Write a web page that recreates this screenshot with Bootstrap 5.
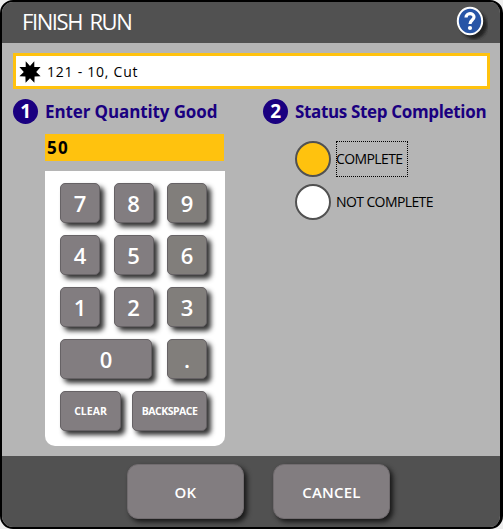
<!DOCTYPE html>
<html lang="en">
<head>
<meta charset="utf-8">
<title>Finish Run</title>
<link href="https://cdn.jsdelivr.net/npm/bootstrap@5.3.0/dist/css/bootstrap.min.css" rel="stylesheet">
<style>
body{background:#eee;font-family:"Open Sans","Noto Sans",sans-serif;color:#000;line-height:1}
.dialog{width:503px;height:529px;background:#b5b5b5;border:2px solid #000;border-right-width:3px;border-radius:13px}
.titlebar{height:41px;background:#515151;padding:0 12px 0 20px}
.titlebar h1{font-size:22px;line-height:39px;height:41px;letter-spacing:-1.4px;word-spacing:3px}
.stepbox{margin:10px 10px 0 11px;height:36px;border:3px solid #ffc20e;background:#fff;padding:1px 0 0 3px;font-size:14px;gap:6px}
.job{letter-spacing:.75px}
.content{height:367px;padding:10px 0 0 11px}
.step-title{height:25px;gap:7px;color:#1a0080;font-size:17px;font-weight:700;white-space:nowrap;letter-spacing:-.12px}
.step-title-status{letter-spacing:-.34px}
.step-num{width:25px;height:25px;background:#1a0080;color:#fff;font-size:19px}
.left-col{width:250px}
.qty{width:179px;height:27px;margin:10px 0 0 32px;background:#ffc20e;padding-left:2px;font-size:17px;font-weight:700;letter-spacing:1.2px}
.pad{width:180px;height:275px;margin:10px 0 0 32px;padding:12px 18px 0 15px;background:#fff;border-radius:0 0 10px 10px;gap:12px}
.key{width:40px;height:40px;padding:0;border:1px solid #666265;border-radius:5px;background:#827d80;color:#fff;font-size:22px;font-weight:600;line-height:1;box-shadow:4px 4px 5px #333}
.key:hover{background:#777275;color:#fff}
.key-alt{background:#817e7b}
.key-zero{width:92px}.key-clear{width:61px}.key-back{width:75px}
.key-word{font-size:10.5px;font-weight:700}
.key-back{letter-spacing:-.5px}
.choices{margin:17px 0 0 32px;gap:7px}
.choice{height:36px;gap:5px;font-size:14px}
.knob{width:36px;height:36px;border:2px solid #515151;background:#fff}
.knob.on{background:#ffc20e}
.choice-label{height:36px;width:72px;border:1px solid transparent;white-space:nowrap;letter-spacing:-.6px;text-indent:-1px}
.choice-label.focused{border:1px dotted #000}
.actions{height:71px;background:#515151;padding:8px 0 0 125px;gap:29px}
.action{width:117px;height:55px;border:1px solid #716c6f;border-radius:11px;background:#827d80;color:#fff;font-size:15px;font-weight:600;padding:2px 0 0;letter-spacing:.2px;box-shadow:3px 3px 5px #181818}
</style>
</head>
<body>
<main class="dialog overflow-hidden">
<header class="titlebar d-flex align-items-center justify-content-between text-white">
<h1 class="fw-normal m-0">FINISH RUN</h1>
<svg width="34" height="34" viewBox="0 1 34 34" aria-label="Help"><defs><filter id="soft" x="-30%" y="-30%" width="180%" height="180%"><feGaussianBlur stdDeviation="1.5"/></filter></defs><ellipse cx="20" cy="20" rx="13" ry="14" fill="#202020" filter="url(#soft)"/><ellipse cx="16" cy="16" rx="12.2" ry="13.2" fill="#2855a6" stroke="#fff" stroke-width="2"/><path d="M12 12.5C12 7.5 20 7.5 20 12c0 3-4 3-4 7" fill="none" stroke="#fff" stroke-width="3.2"/><circle cx="16" cy="23" r="2.1" fill="#fff"/></svg>
</header>
<div class="stepbox d-flex align-items-center">
<svg width="22" height="22" viewBox="-11 -11 22 22"><path d="M0-6 4.3-10.8 4.3-4.9 10.6-5 6.2 0 10.6 4.2 4.6 4.4 4.4 10.8 0 6.2-4.4 10.8-4.6 4.4-10.6 4.2-6.2 0-10.6-5-4.3-4.9-4.3-10.8Z"/></svg>
<span class="job">121 - 10, Cut</span>
</div>
<div class="content d-flex">
<section class="left-col flex-shrink-0">
<div class="step-title d-flex align-items-center"><span class="step-num rounded-circle d-flex align-items-center justify-content-center">1</span><span>Enter Quantity Good</span></div>
<div class="qty d-flex align-items-center">50</div>
<div class="pad d-flex flex-column">
<div class="d-flex justify-content-between"><button class="btn key">7</button><button class="btn key">8</button><button class="btn key key-alt">9</button></div>
<div class="d-flex justify-content-between"><button class="btn key">4</button><button class="btn key">5</button><button class="btn key key-alt">6</button></div>
<div class="d-flex justify-content-between"><button class="btn key">1</button><button class="btn key">2</button><button class="btn key key-alt">3</button></div>
<div class="d-flex justify-content-between"><button class="btn key key-zero">0</button><button class="btn key key-alt">.</button></div>
<div class="d-flex justify-content-between"><button class="btn key key-word key-clear">CLEAR</button><button class="btn key key-word key-back">BACKSPACE</button></div>
</div>
</section>
<section>
<div class="step-title step-title-status d-flex align-items-center"><span class="step-num rounded-circle d-flex align-items-center justify-content-center">2</span><span>Status Step Completion</span></div>
<div class="choices d-flex flex-column">
<div class="choice d-flex"><span class="knob on rounded-circle"></span><span class="choice-label focused d-flex align-items-center">COMPLETE</span></div>
<div class="choice d-flex"><span class="knob rounded-circle"></span><span class="choice-label d-flex align-items-center">NOT COMPLETE</span></div>
</div>
</section>
</div>
<footer class="actions d-flex"><button class="btn action">OK</button><button class="btn action">CANCEL</button></footer>
</main>
<script src="https://cdn.jsdelivr.net/npm/bootstrap@5.3.0/dist/js/bootstrap.bundle.min.js"></script>
</body>
</html>
